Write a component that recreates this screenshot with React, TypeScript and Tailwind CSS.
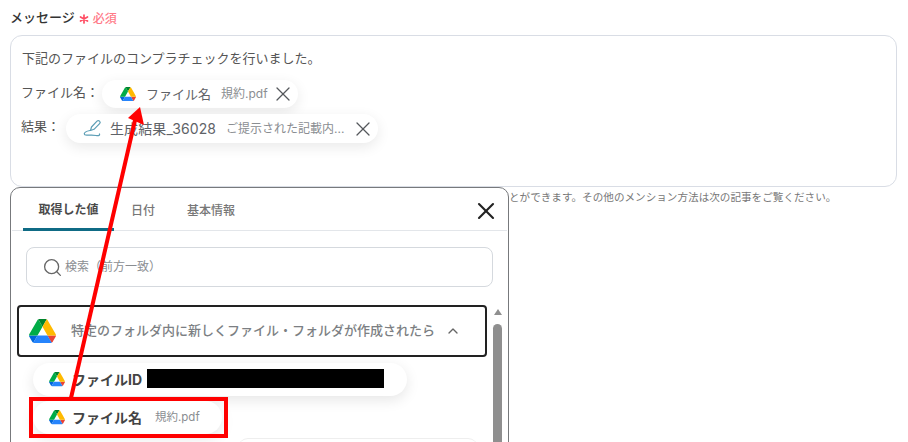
import { ChevronUp, Search, X } from "lucide-react";

const fontStack = "font-['Inter','Noto_Sans_CJK_JP',sans-serif]";

function DriveIcon({ size }: { size: number }) {
  return (
    <svg width={size} height={(size * 78) / 87.3} viewBox="0 0 87.3 78" className="shrink-0">
      <path d="M6.6 66.85l3.85 6.65c.8 1.4 1.95 2.5 3.3 3.3L27.5 53H0c0 1.55.4 3.1 1.2 4.5z" fill="#0066da" />
      <path d="M43.65 25L29.9 1.2c-1.35.8-2.5 1.9-3.3 3.3L1.2 48.5C.4 49.9 0 51.45 0 53h27.5z" fill="#00ac47" />
      <path d="M73.55 76.8c1.35-.8 2.5-1.9 3.3-3.3l1.6-2.75 7.65-13.25c.8-1.4 1.2-2.95 1.2-4.5H59.8l5.85 11.5z" fill="#ea4335" />
      <path d="M43.65 25L57.4 1.2C56.05.4 54.5 0 52.9 0H34.4c-1.6 0-3.15.45-4.5 1.2z" fill="#00832d" />
      <path d="M59.8 53H27.5L13.75 76.8c1.35.8 2.9 1.2 4.5 1.2h50.8c1.6 0 3.15-.45 4.5-1.2z" fill="#2684fc" />
      <path d="M73.4 26.5L60.7 4.5c-.8-1.4-1.95-2.5-3.3-3.3L43.65 25 59.8 53h27.45c0-1.55-.4-3.1-1.2-4.5z" fill="#ffba00" />
    </svg>
  );
}

function GenerateIcon() {
  return (
    <svg width="20" height="20" viewBox="0 0 20 20" fill="none" stroke="#5b9db5" strokeWidth="1.2" strokeLinecap="round" strokeLinejoin="round" className="shrink-0">
      <path d="M8.500 11.500l1-3.500L15 2.200a1.800 1.800 0 0 1 2.600 2.500L12 10.300z" />
      <path d="M8 11.500C4 12 1.500 14 2.500 15.500 3.500 17 10 15.500 14 16.500c3 .7 4-.5 3.500-1.500" />
    </svg>
  );
}

function RequiredMark() {
  return (
    <svg width="10" height="10" viewBox="0 0 10 10" stroke="#ff4d63" strokeWidth="1.700" strokeLinecap="round" className="shrink-0 mt-[3px]">
      <path d="M5 1v8M1.500 3l7 4M8.500 3l-7 4" />
    </svg>
  );
}

function Chip({ className, icon, title, titleClass, value }: { className: string; icon: React.ReactNode; title: string; titleClass: string; value: string }) {
  return (
    <div className={`flex items-center rounded-full bg-white shadow-[0_4px_14px_rgba(0,0,0,0.09)] ${className}`}>
      {icon}
      <span className={`leading-none text-[#5f6368] ${titleClass}`}>{title}</span>
      <span className="ml-[10px] text-[12px] leading-none text-[#8a8d91]">{value}</span>
      <X size={24} strokeWidth={1.300} className="ml-auto text-[#55585c]" />
    </div>
  );
}

function ArrowOverlay() {
  return (
    <svg width="908" height="442" className="absolute left-0 top-0 pointer-events-none">
      <line x1="71" y1="398" x2="135.500" y2="118" stroke="#ff0000" strokeWidth="4" />
      <polygon points="140,107 144,125 128,118" fill="#ff0000" />
    </svg>
  );
}

export default function App() {
  return (
    <div className={`relative w-[908px] h-[442px] overflow-hidden bg-white ${fontStack}`}>
      <div className="pl-[10px] pr-[11px] pt-[9px]">
        <div className="flex items-center h-[17px] gap-[4px]">
          <span className="text-[13px] font-medium leading-none text-[#333]">メッセージ</span>
          <RequiredMark />
          <span className="text-[12px] font-medium leading-none text-[#ff7a88] mt-[2px]">必須</span>
        </div>

        <div className="mt-[9px] h-[152px] rounded-[12px] border border-[#d9dde5] pl-[10px] pt-[12px]">
          <p className="pl-[1px] text-[13px] leading-[20px] text-[#555]">下記のファイルのコンプラチェックを行いました。</p>
          <div className="flex items-center mt-[12px] h-[28px]">
            <span className="text-[13px] leading-none text-[#555] w-[81px] -mt-[4px]">ファイル名：</span>
            <Chip
              className="w-[196px] h-[28px] pl-[18px] pr-[3px]"
              icon={<span className="mr-[10px]"><DriveIcon size={16} /></span>}
              title="ファイル名"
              titleClass="text-[13px]"
              value="規約.pdf"
            />
          </div>
          <div className="flex items-center mt-[6px] h-[29px]">
            <span className="text-[13px] leading-none text-[#555] w-[45px] -mt-[4px]">結果：</span>
            <Chip
              className="w-[312px] h-[29px] pl-[16px] pr-[3px]"
              icon={<span className="mr-[8px]"><GenerateIcon /></span>}
              title="生成結果_36028"
              titleClass="text-[14px] tracking-[0.1px]"
              value="ご提示された記載内..."
            />
          </div>
        </div>

        <p className="mt-[4px] pl-[499px] text-[10.600px] leading-[14px] text-[#777] whitespace-nowrap">とができます。その他のメンション方法は次の記事をご覧ください。</p>
      </div>

      {/* mention picker popover */}
      <div className="absolute left-[10px] top-[187px] w-[499px] h-[270px] rounded-t-[10px] border border-[#77797c] bg-white">
        <div className="relative flex h-[43px] border-b border-[#e3e6ea] mx-[1px]">
          <div className="flex items-center justify-center w-[91px] ml-[11px] pt-[4px] border-b-[3px] border-[#0f6b85] h-[43px] text-[12px] font-bold text-[#4a4a4a]">取得した値</div>
          <div className="flex items-center ml-[17px] pt-[4px] text-[12px] font-medium text-[#777]">日付</div>
          <div className="flex items-center ml-[32px] pt-[4px] text-[12px] font-medium text-[#777]">基本情報</div>
          <X size={28} strokeWidth={1.800} className="absolute right-[7px] top-[9px] text-[#222]" />
        </div>

        <div className="mx-[15px] mt-[16px] h-[40px] w-[467px] flex items-center rounded-[8px] border border-[#d5d9de] pl-[15px]">
          <Search size={21} strokeWidth={1.500} className="text-[#666]" />
          <span className="ml-[2px] text-[12px] text-[#8a8d91]">検索（前方一致）</span>
        </div>

        <div className="relative mt-[18px] h-[150px]">
          <div className="ml-[6px] w-[470px] h-[52px] flex items-center rounded-[4px] border-2 border-[#222] pl-[10px]">
            <DriveIcon size={27} />
            <span className="ml-[15px] text-[13px] font-medium text-[#7c7f83] whitespace-nowrap">特定のフォルダ内に新しくファイル・フォルダが作成されたら</span>
            <ChevronUp size={16} strokeWidth={2} className="ml-[10px] text-[#666]" />
          </div>

          <div className="ml-[22px] mt-[6px] w-[374px] h-[33px] flex items-center rounded-full bg-white shadow-[0_4px_14px_rgba(0,0,0,0.1)] pl-[16px]">
            <DriveIcon size={16} />
            <span className="ml-[7px] text-[14px] font-bold text-[#444]">ファイルID</span>
            <span className="ml-[5px] -mt-[3px] w-[237px] h-[19px] bg-black" />
          </div>

          <div className="ml-[22px] mt-[5px] w-[189px] h-[33px] flex items-center rounded-full bg-white shadow-[0_4px_14px_rgba(0,0,0,0.1)] pl-[16px]">
            <DriveIcon size={16} />
            <span className="ml-[7px] text-[14px] font-bold text-[#444]">ファイル名</span>
            <span className="ml-[13px] text-[11.500px] text-[#8a8d91]">規約.pdf</span>
          </div>

          <div className="ml-[227px] mt-[4px] w-[240px] h-[20px] rounded-t-[10px] border-t border-[#eeeeee]" />

          <div className="absolute right-[6px] top-[0px] w-[9px] h-[150px] flex flex-col items-center">
            <span className="w-0 h-0 border-x-[4.500px] border-x-transparent border-b-[6px] border-b-[#8f8f8f] mt-[4px]" />
            <span className="mt-[9px] w-[9px] flex-1 rounded-full bg-[#8f8f8f]" />
          </div>
        </div>
      </div>

      <ArrowOverlay />
      {/* red highlight box around the selected item */}
      <div className="absolute left-[29px] top-[397px] w-[199px] h-[41px] border-4 border-[#ff0000]" />
    </div>
  );
}
